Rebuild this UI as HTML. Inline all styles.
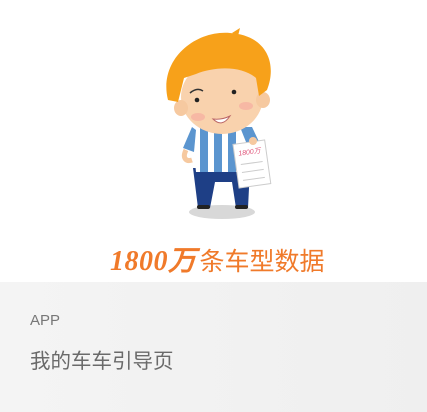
<!DOCTYPE html>
<html><head><meta charset="utf-8"><style>
html,body{margin:0;padding:0;width:427px;height:412px;overflow:hidden;background:#fff;font-family:"Liberation Sans","Noto Sans CJK SC",sans-serif}
.top{position:absolute;left:0;top:0;width:427px;height:282px;background:#fff}
.bot{position:absolute;left:0;top:282px;width:427px;height:130px;background:linear-gradient(90deg,#f4f4f4,#efefef)}
.app{position:absolute;left:30px;top:312px;font-size:15px;color:#777}
.title{position:absolute;left:30px;top:344px;font-size:20.5px;color:#6a6a6a}
.head{position:absolute;left:110px;top:239px;color:#f07a2a;white-space:nowrap}
.num{font-family:"Liberation Serif",serif;font-style:italic;font-weight:bold;font-size:28px;letter-spacing:0.5px}
.cn{font-size:25px;margin-left:3px}
</style></head><body>
<div class="top">
<svg width="427" height="282" style="position:absolute;left:0;top:0">
<ellipse cx="222" cy="212" rx="33" ry="7" fill="#d8d8d8"/>
<path d="M193 168 L250 168 L248 208 L236 208 L232 182 L215 182 L210 208 L198 208 Z" fill="#1e3f86"/>
<rect x="197" y="205" width="13" height="4" rx="2" fill="#222"/>
<rect x="235" y="205" width="13" height="4" rx="2" fill="#222"/>
<path d="M192 127 L252 127 L262 148 L250 152 L248 172 L196 172 L194 152 L183 148 Z" fill="#fff"/>
<rect x="200" y="127" width="8" height="45" fill="#5b95cf"/>
<rect x="214" y="127" width="8" height="45" fill="#5b95cf"/>
<rect x="228" y="127" width="8" height="45" fill="#5b95cf"/>
<path d="M192 127 L183 148 L194 152 L196 130Z" fill="#5b95cf"/>
<path d="M240 127 L252 127 L262 148 L250 152Z" fill="#5b95cf"/>
<path d="M186 150 C182 158 186 162 192 160" stroke="#f6c9a0" stroke-width="5" fill="none"/>
<g transform="rotate(-8 252 165)">
<rect x="236" y="142" width="32" height="44" fill="#fff" stroke="#ccc"/>
<text x="240" y="154" font-size="7" fill="#e0557a" font-style="italic">1800万</text>
<line x1="241" y1="163" x2="263" y2="163" stroke="#ccc"/>
<line x1="241" y1="171" x2="263" y2="171" stroke="#ccc"/>
<line x1="241" y1="179" x2="263" y2="179" stroke="#ccc"/>
</g>
<circle cx="253" cy="141" r="4" fill="#f6c9a0"/>
<ellipse cx="222" cy="97" rx="41" ry="37" fill="#f9d2ad"/>
<ellipse cx="181" cy="108" rx="7" ry="8" fill="#f6c9a0"/>
<ellipse cx="263" cy="100" rx="7" ry="8" fill="#f6c9a0"/>
<ellipse cx="198" cy="117" rx="7" ry="4" fill="#f7b8a4"/>
<ellipse cx="246" cy="106" rx="7" ry="4" fill="#f7b8a4"/>
<circle cx="197" cy="100" r="2.3" fill="#222"/>
<circle cx="234" cy="92" r="2.3" fill="#222"/>
<path d="M190 93 Q197 87 203 91" stroke="#333" stroke-width="1.5" fill="none"/>
<path d="M213 119 Q222 128 230 116 Q222 120 213 119Z" fill="#fff" stroke="#b66" stroke-width="1"/>
<path d="M168 100 C158 60 195 30 230 33 C265 35 278 62 267 90 L259 96 L256 78 C242 66 216 66 196 74 L184 78 L178 102Z" fill="#f7a11a"/>
<path d="M232 33 L240 28 L238 36Z" fill="#f7a11a"/>
</svg>
<div class="head"><span class="num">1800万</span><span class="cn">条车型数据</span></div>
</div>
<div class="bot"></div>
<div class="app">APP</div>
<div class="title">我的车车引导页</div>
</body></html>
